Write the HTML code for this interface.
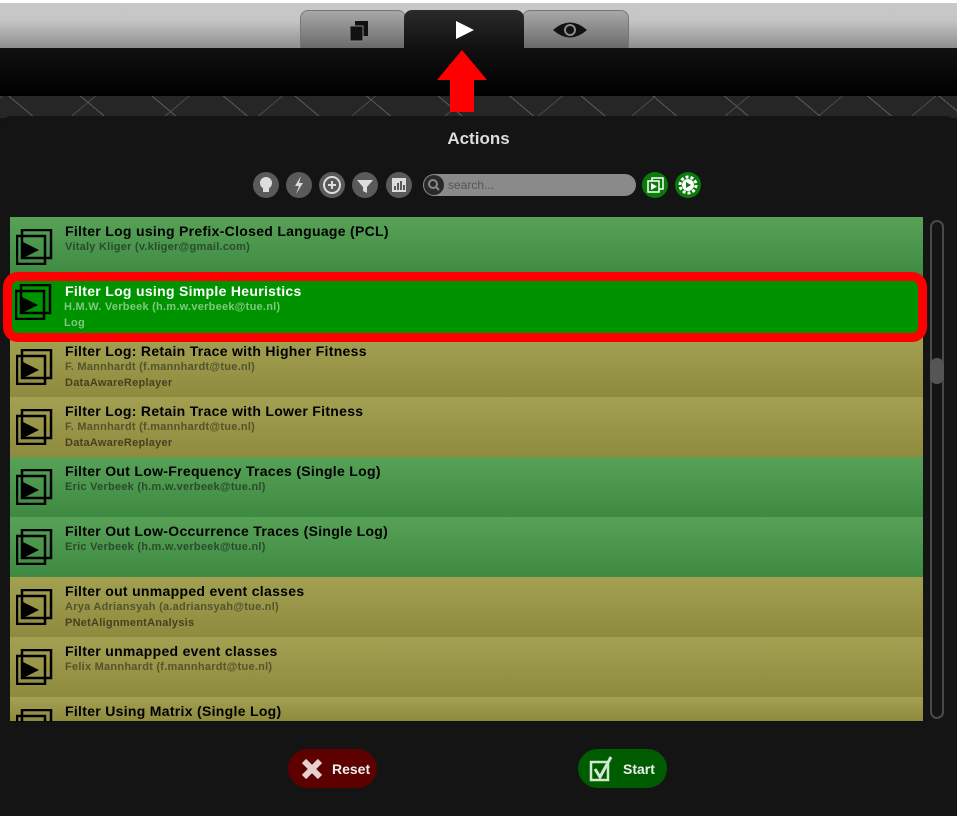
<!DOCTYPE html>
<html><head><meta charset="utf-8"><style>
*{margin:0;padding:0;box-sizing:border-box}
body{width:957px;height:812px;background:#141414;font-family:"Liberation Sans",sans-serif;position:relative;overflow:hidden}
.top{position:absolute;left:0;top:0;width:957px;height:48px;background:linear-gradient(#fff 0,#fff 3px,#c8c8c8 3px,#c6c6c6 20px,#8e8e8e 48px)}
.band{position:absolute;left:0;top:48px;width:957px;height:48px;background:linear-gradient(#111,#000)}
.tex{position:absolute;left:0;top:96px;width:957px;height:22px;background:#262626;
background-image:repeating-linear-gradient(40deg,transparent 0 22px,#5a5a5a 22px 23px,transparent 23px 46px),repeating-linear-gradient(-40deg,transparent 0 30px,#4a4a4a 30px 31px,transparent 31px 60px);}
.tab{position:absolute;top:10px;height:38px;border-radius:8px 8px 0 0}
.t1{left:300px;width:106px;background:linear-gradient(#a8a8a8,#6a6a6a);border:1px solid #777;border-bottom:none}
.t3{left:522px;width:107px;background:linear-gradient(#a8a8a8,#6a6a6a);border:1px solid #777;border-bottom:none}
.t2{left:404px;width:120px;background:linear-gradient(#2a2a2a,#111);z-index:2}
.panel{position:absolute;left:0;top:116px;width:957px;height:700px;background:#141414;border-radius:12px 12px 0 0}
h1{position:absolute;top:129px;left:0;width:957px;text-align:center;color:#ddd;font-size:17px;font-weight:bold}
.ib{position:absolute;top:172px;width:26px;height:26px;border-radius:50%;background:#5a5a5a}
.search{position:absolute;left:423px;top:174px;width:213px;height:22px;border-radius:11px;background:#8a8a8a;color:#555;font-size:12px;padding:4px 0 0 25px}
.gb{position:absolute;top:172px;width:26px;height:26px;border-radius:50%;background:#0a7a0a}
.list{position:absolute;left:10px;top:217px;width:913px;height:505px;overflow:hidden;background:#111}
.row{position:absolute;left:0;width:913px;height:60px}
.g{background:linear-gradient(#57a257,#3e8a42)}
.o{background:linear-gradient(#a3a052,#8e8b3e)}
.ti{letter-spacing:0.3px}
.s1,.s2{letter-spacing:0.25px}
.row .ti{position:absolute;left:55px;top:6px;font-size:14px;font-weight:bold;color:#000}
.row .s1{position:absolute;left:55px;top:24px;font-size:11px;font-weight:bold;color:#333b2a}
.row .s2{position:absolute;left:55px;top:40px;font-size:11px;font-weight:bold;color:#3c3a20}
.g .s1{color:#2b4a2b}.o .s1{color:#55532a}.o .s2{color:#44421e}
.ic{position:absolute;left:6px;top:12px}
.sel{position:absolute;left:3px;top:272px;width:924px;height:70px;border:9px solid #f00;border-radius:15px;background:#009300;z-index:3}
.sel .ti{position:absolute;left:53px;top:2px;font-size:14px;font-weight:bold;color:#fff}
.sel .s1{position:absolute;left:52px;top:20px;font-size:11px;font-weight:bold;color:#7fc97f}
.sel .s2{position:absolute;left:52px;top:36px;font-size:11px;font-weight:bold;color:#7fc97f}
.sb{position:absolute;left:930px;top:220px;width:14px;height:499px;border:2px solid #4a4a4a;border-radius:7px}
.th{position:absolute;left:930px;top:358px;width:14px;height:26px;border-radius:7px;background:#555}
.btn{position:absolute;top:749px;height:39px;border-radius:20px;color:#eee;font-size:14px;font-weight:bold}
</style></head><body>
<div class="top"></div>
<div class="tab t1"><svg style="position:absolute;left:47px;top:9px" width="22" height="22"><rect x="7" y="1" width="13" height="15" fill="#111"/><rect x="2" y="6" width="13" height="15" fill="#111" stroke="#888" stroke-width="1"/></svg></div>
<div class="tab t3"><svg style="position:absolute;left:29px;top:8px" width="36" height="22"><path d="M1 11 Q18 -4 35 11 Q18 26 1 11Z" fill="#111"/><circle cx="18" cy="11" r="6" fill="#8a8a8a"/><circle cx="18" cy="11" r="4" fill="#111"/></svg></div>
<div class="tab t2"><svg style="position:absolute;left:50px;top:10px" width="22" height="20"><path d="M2 1 L20 10 L2 19Z" fill="#fff"/></svg></div>
<div class="band"></div>
<div class="tex"></div>
<div class="panel"></div>
<svg style="position:absolute;left:436px;top:50px;z-index:5" width="52" height="62"><path d="M26 0 L51 30 L38 30 L38 62 L14 62 L14 30 L1 30Z" fill="#f00"/></svg>
<h1>Actions</h1>
<div class="ib" style="left:253px"><svg width="26" height="26"><circle cx="13" cy="11" r="6" fill="#ddd"/><rect x="10" y="15" width="6" height="5" fill="#ddd"/></svg></div>
<div class="ib" style="left:286px"><svg width="26" height="26"><path d="M15 4 L9 14 L13 14 L10 22 L17 11 L13 11Z" fill="#ddd"/></svg></div>
<div class="ib" style="left:319px"><svg width="26" height="26"><circle cx="13" cy="13" r="8" fill="none" stroke="#ddd" stroke-width="2"/><path d="M13 9v8M9 13h8" stroke="#ddd" stroke-width="2"/></svg></div>
<div class="ib" style="left:352px"><svg width="26" height="26"><path d="M5 8 H21 L15 15 V21 L11 19 V15Z" fill="#ddd"/></svg></div>
<div class="ib" style="left:386px"><svg width="26" height="26"><rect x="6" y="6" width="14" height="14" fill="#ddd"/><path d="M9 18v-4M12 18v-7M15 18v-9M18 18v-5" stroke="#5a5a5a" stroke-width="2"/></svg></div>
<div class="search">search...<svg style="position:absolute;left:0;top:0" width="22" height="22"><circle cx="11" cy="11" r="10" fill="#2a2a2a"/><circle cx="10" cy="10" r="4" fill="none" stroke="#888" stroke-width="2"/><path d="M13 13l3 3" stroke="#888" stroke-width="2"/></svg></div>
<div class="gb" style="left:642px"><svg width="26" height="26"><rect x="10" y="6" width="11" height="11" fill="none" stroke="#fff" stroke-width="1.5"/><rect x="6" y="9" width="11" height="11" fill="#0a7a0a" stroke="#fff" stroke-width="1.5"/><path d="M9 11 L15 14.5 L9 18Z" fill="#fff"/></svg></div>
<div class="gb" style="left:675px"><svg width="26" height="26"><circle cx="13" cy="13" r="8" fill="none" stroke="#fff" stroke-width="3" stroke-dasharray="3 2"/><circle cx="13" cy="13" r="6" fill="#fff"/><path d="M11 10 L16 13 L11 16Z" fill="#0a7a0a"/></svg></div>

<div class="list">
<div class="row g" style="top:0"><svg class="ic" width="40" height="36"><rect x="6" y="1" width="29" height="28" fill="none" stroke="#000" stroke-width="2.5"/><rect x="1" y="7" width="28" height="28" fill="none" stroke="#000" stroke-width="2.5"/><path d="M7 13 L23 21 L7 29Z" fill="#000"/></svg><div class="ti">Filter Log using Prefix-Closed Language (PCL)</div><div class="s1">Vitaly Kliger (v.kliger@gmail.com)</div></div>
<div class="row g" style="top:60px"></div>
<div class="row o" style="top:120px"><svg class="ic" width="40" height="36"><rect x="6" y="1" width="29" height="28" fill="none" stroke="#000" stroke-width="2.5"/><rect x="1" y="7" width="28" height="28" fill="none" stroke="#000" stroke-width="2.5"/><path d="M7 13 L23 21 L7 29Z" fill="#000"/></svg><div class="ti">Filter Log: Retain Trace with Higher Fitness</div><div class="s1">F. Mannhardt (f.mannhardt@tue.nl)</div><div class="s2">DataAwareReplayer</div></div>
<div class="row o" style="top:180px"><svg class="ic" width="40" height="36"><rect x="6" y="1" width="29" height="28" fill="none" stroke="#000" stroke-width="2.5"/><rect x="1" y="7" width="28" height="28" fill="none" stroke="#000" stroke-width="2.5"/><path d="M7 13 L23 21 L7 29Z" fill="#000"/></svg><div class="ti">Filter Log: Retain Trace with Lower Fitness</div><div class="s1">F. Mannhardt (f.mannhardt@tue.nl)</div><div class="s2">DataAwareReplayer</div></div>
<div class="row g" style="top:240px"><svg class="ic" width="40" height="36"><rect x="6" y="1" width="29" height="28" fill="none" stroke="#000" stroke-width="2.5"/><rect x="1" y="7" width="28" height="28" fill="none" stroke="#000" stroke-width="2.5"/><path d="M7 13 L23 21 L7 29Z" fill="#000"/></svg><div class="ti">Filter Out Low-Frequency Traces (Single Log)</div><div class="s1">Eric Verbeek (h.m.w.verbeek@tue.nl)</div></div>
<div class="row g" style="top:300px"><svg class="ic" width="40" height="36"><rect x="6" y="1" width="29" height="28" fill="none" stroke="#000" stroke-width="2.5"/><rect x="1" y="7" width="28" height="28" fill="none" stroke="#000" stroke-width="2.5"/><path d="M7 13 L23 21 L7 29Z" fill="#000"/></svg><div class="ti">Filter Out Low-Occurrence Traces (Single Log)</div><div class="s1">Eric Verbeek (h.m.w.verbeek@tue.nl)</div></div>
<div class="row o" style="top:360px"><svg class="ic" width="40" height="36"><rect x="6" y="1" width="29" height="28" fill="none" stroke="#000" stroke-width="2.5"/><rect x="1" y="7" width="28" height="28" fill="none" stroke="#000" stroke-width="2.5"/><path d="M7 13 L23 21 L7 29Z" fill="#000"/></svg><div class="ti">Filter out unmapped event classes</div><div class="s1">Arya Adriansyah (a.adriansyah@tue.nl)</div><div class="s2">PNetAlignmentAnalysis</div></div>
<div class="row o" style="top:420px"><svg class="ic" width="40" height="36"><rect x="6" y="1" width="29" height="28" fill="none" stroke="#000" stroke-width="2.5"/><rect x="1" y="7" width="28" height="28" fill="none" stroke="#000" stroke-width="2.5"/><path d="M7 13 L23 21 L7 29Z" fill="#000"/></svg><div class="ti">Filter unmapped event classes</div><div class="s1">Felix Mannhardt (f.mannhardt@tue.nl)</div></div>
<div class="row o" style="top:480px;height:24px"><svg class="ic" width="40" height="36"><rect x="6" y="1" width="29" height="28" fill="none" stroke="#000" stroke-width="2.5"/><rect x="1" y="7" width="28" height="28" fill="none" stroke="#000" stroke-width="2.5"/><path d="M7 13 L23 21 L7 29Z" fill="#000"/></svg><div class="ti">Filter Using Matrix (Single Log)</div></div>
</div>
<div class="sel"><svg style="position:absolute;left:3px;top:3px" width="40" height="36"><rect x="6" y="1" width="29" height="28" fill="none" stroke="#000" stroke-width="2.5"/><rect x="1" y="7" width="28" height="28" fill="none" stroke="#000" stroke-width="2.5"/><path d="M7 13 L23 21 L7 29Z" fill="#000"/></svg><div class="ti">Filter Log using Simple Heuristics</div><div class="s1">H.M.W. Verbeek (h.m.w.verbeek@tue.nl)</div><div class="s2">Log</div></div>
<div class="sb"></div><div class="th"></div>
<div class="btn" style="left:288px;width:89px;background:#5c0000"><svg style="position:absolute;left:12px;top:8px" width="24" height="24"><path d="M4 4 L20 20 M20 4 L4 20" stroke="#e8d0d0" stroke-width="6"/></svg><span style="position:absolute;left:44px;top:12px">Reset</span></div>
<div class="btn" style="left:578px;width:89px;background:#005c00"><svg style="position:absolute;left:11px;top:6px" width="26" height="28"><rect x="2" y="7" width="17" height="18" fill="none" stroke="#cfe8cf" stroke-width="2.5"/><path d="M6 14 L11 22 L22 2" fill="none" stroke="#cfe8cf" stroke-width="3"/></svg><span style="position:absolute;left:45px;top:12px">Start</span></div>
</body></html>
